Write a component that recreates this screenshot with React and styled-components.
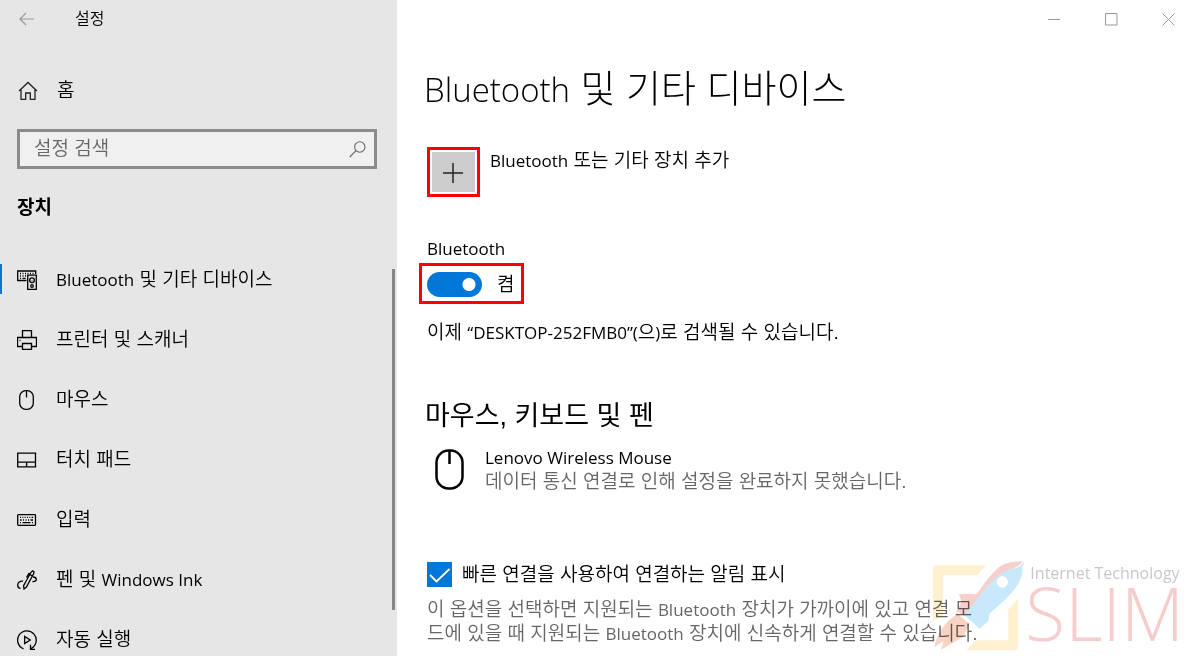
import styled, { createGlobalStyle } from "styled-components";

// Latin runs are set a little smaller than the hangul beside them
const Latin = styled.span`
  font-family: "Open Sans", sans-serif;
  font-size: 17px;
  font-weight: 400;
  line-height: 1;
`;

const navItems = [
  { label: <><Latin>Bluetooth</Latin> 및 기타 디바이스</>, icon: "devices", active: true },
  { label: "프린터 및 스캐너", icon: "printer" },
  { label: "마우스", icon: "mouse" },
  { label: "터치 패드", icon: "touchpad" },
  { label: "입력", icon: "keyboard" },
  { label: <>펜 및 <Latin>Windows Ink</Latin></>, icon: "pen" },
  { label: "자동 실행", icon: "autoplay" },
];

// 20x20 line icons
const iconShapes = {
  devices: (
    <>
      <path d="M9.5 10.5H.7V1h18v3M3 3.5h1M5.5 3.5h1M8 3.5h1M10.5 3.5h1M13 3.5h1M15.5 3.5h1M3 6h1M5.5 6h1M8 6h1M3 8.3h1M5.5 8.3h3" />
      <path d="M10.7 5.2h8.6v14.1h-8.6z" />
      <circle cx="15" cy="10.3" r="2.4" />
      <circle cx="15" cy="16" r="1.3" />
      <path d="M15 10v.6" />
    </>
  ),
  printer: (
    <>
      <path d="M5.5 7.5v-7h9v7M5.5 16.5h-5v-9h19v9h-5" />
      <path d="M5.5 13.5h9v6h-9zM2.5 10.5h1" />
    </>
  ),
  mouse: (
    <>
      <rect x="2.7" y=".7" width="13.6" height="18.6" rx="6" />
      <path d="M9.5 1v6.5" />
    </>
  ),
  touchpad: <path d="M.7 3.2h17.8v13.6H.7zM.7 12.2h17.8M9.6 12.2v4.6" />,
  keyboard: (
    <>
      <rect x=".7" y="4.7" width="17.8" height="10.6" rx=".8" />
      <path d="M3 7.3h1M5.3 7.3h1M7.6 7.3h1M10 7.3h1M12.3 7.3h1M14.6 7.3h1.6M3 10h1.6M6 10h1M8.5 10h1M11 10h1M13.5 10h2.5M3 12.6h1M5.5 12.6h8M15 12.6h1" />
    </>
  ),
  pen: (
    <>
      <path d="M7 19l-.4-3.4L14 2.3l1.6-1.5 1.4.9-.4 2.2L9.4 17.1zM12.8 4.5l2.8 1.6M12.3 2.8L9.5 7.5" />
      <path d="M6 11.2c-3-.6-5.3 1.3-5.3 3.8 0 2 1.2 3.3 2.8 3.3M16 7c2 0 3.3 1 3.3 2.5 0 1.7-1.8 2.2-3.8 2" />
    </>
  ),
  autoplay: (
    <>
      <path d="M6.5 18.8A9.3 9.3 0 1 1 14 18.5M13.5 14.8v4.5H18" />
      <path d="M7.7 6.5v7l5.5-3.5z" />
    </>
  ),
};

const Icon = ({ name, size = 20 }) => (
  <IconSvg width={size} height={size} viewBox="0 0 20 20" aria-hidden="true">
    {iconShapes[name]}
  </IconSvg>
);

const BrandLogo = () => (
  <svg width="91" height="91" viewBox="18 17 273 273" aria-hidden="true">
    <path fill="#fff0cf" d="M30 33h148l-28 30H48v122l-30 14V45q0-12 12-12zM273 135v142q0 11-11 11H118l30-30h96v-92z" />
    {/* flame */}
    <path fill="#f9d3c4" d="M94 178l34 32-20 38-66 38 8-26-28 18c8-38 30-78 72-100z" />
    {/* hull */}
    <path fill="#f7cfcc" d="M286 20c-20 4-54 0-78 26-24 22-40 48-60 74l-28-2-24 2 8 22-18 34 30 10c50-70 92-120 138-142 20-8 30-14 32-24z" />
    <path fill="#c7e9fb" d="M290 22c-14 24-34 18-58 30-44 22-72 76-120 130l46 41 26-22 4-24c48-42 104-88 98-137 0-8 8-12 4-18z" />
    <circle cx="226" cy="83" r="17" fill="#fff" />
    <path stroke="#fff" strokeWidth="5" d="M92 174l40 36" />
  </svg>
);

export default function App() {
  return (
    <>
      <GlobalStyle />
      <Window>
        <Sidebar>
          <TitleBar>
            <BackButton type="button" aria-label="뒤로">
              <svg width="16" height="14" viewBox="0 0 16 14">
                <path d="M15 7H1M7 1L1 7l6 6" fill="none" stroke="#999" strokeWidth="1.2" />
              </svg>
            </BackButton>
            <span>설정</span>
          </TitleBar>
          <HomeLink href="#home">
            <svg width="20" height="20" viewBox="0 0 20 20" fill="none" stroke="#222" strokeWidth="1.3">
              <path d="M1 10l9-8.5 9 8.5M3 8.5v9.8h4.7V12h4.6v6.3H17V8.5" />
            </svg>
            홈
          </HomeLink>
          <SearchBox>
            <input type="search" placeholder="설정 검색" aria-label="설정 검색" />
            <svg width="17" height="17" viewBox="0 0 17 17" fill="none" stroke="#666" strokeWidth="1.1">
              <circle cx="10.8" cy="6" r="5.2" />
              <path d="M7 9.7L.8 16" />
            </svg>
          </SearchBox>
          <GroupTitle>장치</GroupTitle>
          <Nav>
            {navItems.map((item) => (
              <NavLink key={item.icon} href={`#${item.icon}`} $active={item.active}>
                <Icon name={item.icon} />
                <span>{item.label}</span>
              </NavLink>
            ))}
            <ScrollThumb />
          </Nav>
        </Sidebar>

        <Main>
          <Controls>
            <button type="button" aria-label="최소화">
              <svg width="13" height="13" viewBox="0 0 13 13"><path d="M0 6.5h12" /></svg>
            </button>
            <button type="button" aria-label="최대화">
              <svg width="13" height="13" viewBox="0 0 13 13"><path d="M.5.5h11.5v11.5H.5z" /></svg>
            </button>
            <button type="button" aria-label="닫기">
              <svg width="13" height="13" viewBox="0 0 13 13"><path d="M.5.5l12 12M12.5.5l-12 12" /></svg>
            </button>
          </Controls>
          <Content>
            <PageTitle><Latin>Bluetooth</Latin> 및 기타 디바이스</PageTitle>
            <AddRow>
              <AddButton type="button" id="add" aria-labelledby="add-label">
                <svg width="21" height="21" viewBox="0 0 21 21">
                  <path d="M10 1v20M0 11h20" stroke="#222" strokeWidth="1.5" />
                </svg>
              </AddButton>
              <label id="add-label" htmlFor="add"><Latin>Bluetooth</Latin> 또는 기타 장치 추가</label>
            </AddRow>

            <FieldLabel htmlFor="bluetooth"><Latin>Bluetooth</Latin></FieldLabel>
            <ToggleFrame>
              <Toggle id="bluetooth" type="checkbox" role="switch" defaultChecked />
              <span>켬</span>
            </ToggleFrame>
            <Status>이제 <Latin>“DESKTOP-252FMB0”(</Latin>으<Latin>)</Latin>로 검색될 수 있습니다.</Status>

            <SectionTitle>마우스, 키보드 및 펜</SectionTitle>
            <Device>
              <svg width="30" height="42" viewBox="0 0 30 42" fill="none" stroke="#000" strokeWidth="2.5">
                <rect x="1.5" y="1.5" width="26" height="38" rx="12" />
                <path d="M14.5 2v13" />
              </svg>
              <div>
                <p><Latin>Lenovo Wireless Mouse</Latin></p>
                <Muted>데이터 통신 연결로 인해 설정을 완료하지 못했습니다.</Muted>
              </div>
            </Device>

            <CheckLabel>
              <CheckMark>
                <input type="checkbox" defaultChecked />
                <svg width="25" height="25" viewBox="0 0 25 25">
                  <path d="M3 13l6.5 6.5L22.5 7" fill="none" stroke="#fff" strokeWidth="1.8" />
                </svg>
              </CheckMark>
              빠른 연결을 사용하여 연결하는 알림 표시
            </CheckLabel>
            <Muted>
              이 옵션을 선택하면 지원되는 <Latin>Bluetooth</Latin> 장치가 가까이에 있고 연결 모<br />
              드에 있을 때 지원되는 <Latin>Bluetooth</Latin> 장치에 신속하게 연결할 수 있습니다.
            </Muted>
          </Content>
          <Watermark>
            <BrandLogo />
            <div>
              <Tagline>Internet Technology</Tagline>
              <BrandName>SLIM</BrandName>
            </div>
          </Watermark>
        </Main>
      </Window>
    </>
  );
}

const GlobalStyle = createGlobalStyle`
  * {
    box-sizing: border-box;
  }

  body {
    margin: 0;
    color: #000;
    font: 350 19px/24px "Liberation Sans", "Noto Sans CJK KR", sans-serif;
  }

  p, h1, h2 {
    margin: 0;
  }

  button, input {
    font: inherit;
  }

  a {
    color: inherit;
    text-decoration: none;
  }
`;

const Window = styled.div`
  display: flex;
  height: 100vh;
  overflow: hidden;
  background: #fff;
`;

const Sidebar = styled.aside`
  display: flex;
  flex: 0 0 397px;
  flex-direction: column;
  background: #e6e6e6;
`;

const TitleBar = styled.header`
  display: flex;
  flex: none;
  align-items: center;
  gap: 40px;
  height: 38px;
  padding-left: 19px;
  font-size: 16px;
`;

const BackButton = styled.button`
  display: flex;
  padding: 0;
  border: 0;
  background: none;
`;

const HomeLink = styled.a`
  display: flex;
  flex: none;
  align-items: center;
  gap: 19px;
  height: 48px;
  margin-top: 29px;
  padding-left: 18px;
`;

const SearchBox = styled.div`
  display: flex;
  flex: none;
  align-items: center;
  height: 40px;
  margin: 14px 20px 0 17px;
  padding: 0 8px 0 14px;
  border: 3px solid #8b8b8b;
  background: #f0f0f0;

  input {
    flex: 1;
    min-width: 0;
    padding: 0;
    border: 0;
    outline: 0;
    background: none;
  }

  input::placeholder {
    color: #666;
  }
`;

const GroupTitle = styled.h2`
  flex: none;
  margin: 26px 0 30px 17px;
  font-size: 19px;
  font-weight: 700;
  line-height: 25px;
`;

const Nav = styled.nav`
  position: relative;
  flex: 1;
  min-height: 0;
  overflow: hidden;
`;

const NavLink = styled.a`
  display: flex;
  align-items: center;
  gap: 19px;
  height: 60px;
  padding-left: 17px;
  background: ${(props) =>
    props.$active ? "linear-gradient(#0078d7, #0078d7) 0 14px / 2px 30px no-repeat" : "none"};
`;

const ScrollThumb = styled.div`
  position: absolute;
  top: 19px;
  right: 2px;
  bottom: 46px;
  width: 3px;
  background: #858585;
`;

const IconSvg = styled.svg`
  flex: none;
  fill: none;
  stroke: #000;
  stroke-width: 1.3;
`;

const Main = styled.main`
  position: relative;
  flex: 1;
  min-width: 0;
`;

const Controls = styled.div`
  display: flex;
  justify-content: flex-end;
  gap: 44px;
  height: 38px;
  padding-right: 13px;

  button {
    display: flex;
    align-items: center;
    padding: 0;
    border: 0;
    background: none;
  }

  svg {
    fill: none;
    stroke: #999;
  }
`;

const Content = styled.div`
  padding: 26px 30px 0;
`;

const PageTitle = styled.h1`
  margin-left: -3px;
  font-size: 38px;
  font-weight: 300;
  line-height: 50px;

  ${Latin} {
    font-size: 33px;
    font-weight: 300;
  }
`;

const AddRow = styled.div`
  display: flex;
  gap: 10px;
  margin-top: 33px;
  line-height: 28px;
`;

const AddButton = styled.button`
  display: flex;
  align-items: center;
  justify-content: center;
  width: 53px;
  height: 50px;
  padding: 0;
  border: 3px solid #f00;
  background: #ccc;
  box-shadow: inset 0 0 0 2px #fff;
`;

const FieldLabel = styled.label`
  display: block;
  margin-top: 40px;
`;

const ToggleFrame = styled.div`
  display: flex;
  align-items: center;
  gap: 15px;
  width: fit-content;
  height: 41px;
  margin: 2px 0 0 -8px;
  padding: 2px 7px 0 5px;
  border: 3px solid #f00;
`;

const Toggle = styled.input`
  appearance: none;
  width: 55px;
  height: 25px;
  margin: 0;
  border-radius: 13px;
  background: radial-gradient(circle at 42px 50%, #fff 6px, #0078d7 7px);
`;

const Status = styled.p`
  margin-top: 17px;
`;

const SectionTitle = styled.h2`
  margin: 53px 0 12px -2px;
  font-size: 27px;
  font-weight: 400;
  line-height: 36px;
`;

const Device = styled.div`
  display: flex;
  align-items: center;
  gap: 20px;
  padding-left: 8px;
`;

const Muted = styled.p`
  color: #666;
`;

const CheckLabel = styled.label`
  display: flex;
  align-items: center;
  gap: 10px;
  margin: 68px 0 11px;
`;

const CheckMark = styled.span`
  display: flex;
  background: #0078d7;

  input {
    position: absolute;
    opacity: 0;
  }
`;

const Watermark = styled.div`
  position: absolute;
  right: 4px;
  bottom: 5px;
  display: flex;
  gap: 1px;
  pointer-events: none;
  mix-blend-mode: multiply;
`;

const Tagline = styled.div`
  padding-left: 5px;
  color: #c8c8c8;
  font: 400 16px/26px "Open Sans", sans-serif;
`;

const BrandName = styled.div`
  color: #f6cccc;
  font: 300 73px/54px "Open Sans", sans-serif;
`;
